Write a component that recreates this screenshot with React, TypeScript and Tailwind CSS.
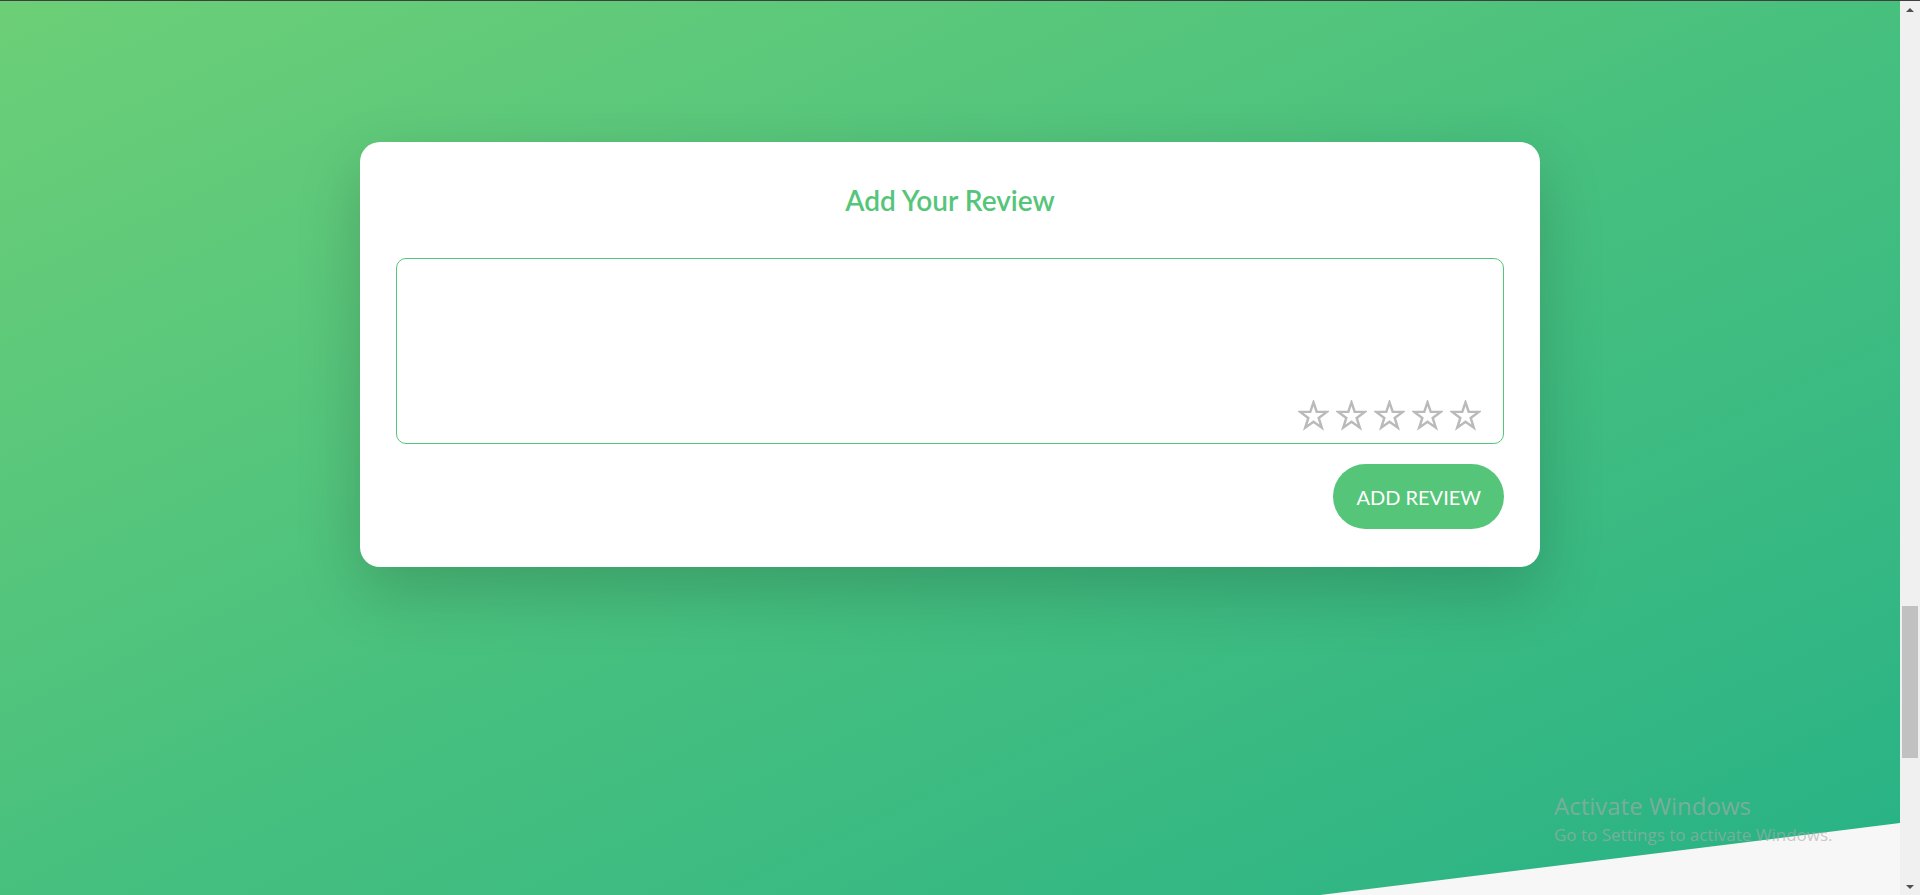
import { useState } from 'react';

function Star({ filled }: { filled: boolean }) {
  return (
    <svg viewBox="0 0 24 24" className="h-[31px] w-[31px]">
      <polygon
        points="12,1.8 14.5,9.2 22.3,9.2 16,13.9 18.4,21.4 12,16.8 5.6,21.4 8,13.9 1.7,9.2 9.5,9.2"
        fill={filled ? '#55c57a' : 'none'}
        stroke={filled ? '#55c57a' : '#bababa'}
        strokeWidth="1.9"
        strokeLinejoin="miter"
      />
    </svg>
  );
}

export default function App() {
  const [rating, setRating] = useState(0);
  const [review, setReview] = useState('');

  return (
    <div className="flex h-[895px] w-full overflow-hidden bg-[#f7f7f7] font-['Lato','Open_Sans',sans-serif]">
      {/* page */}
      <div className="relative flex-1 border-t border-[#3f3f3f]">
        <section className="h-full w-full bg-gradient-to-br from-[#6ccf77] via-[#47c07e] to-[#26b286] [clip-path:polygon(0_0,100%_0,100%_822px,0_1058px)]">
          <div className="pt-[141px]">
            <div className="mx-auto w-[1180px] rounded-[20px] bg-white px-9 pt-9 pb-[38px] shadow-[0_1.5rem_4rem_rgba(0,0,0,0.18)]">
              <h2 className="text-center text-[28px] leading-[44px] font-semibold text-[#55c57a]">
                Add Your Review
              </h2>

              <div className="relative mt-9 h-[186px] rounded-[10px] border border-[#55c57a]">
                <textarea
                  value={review}
                  onChange={(e) => setReview(e.target.value)}
                  className="h-full w-full resize-none rounded-[10px] bg-transparent p-4 text-base text-gray-700 outline-none"
                />
                <div className="absolute right-[22px] bottom-[12px] flex gap-[7px]">
                  {[1, 2, 3, 4, 5].map((n) => (
                    <button key={n} onClick={() => setRating(n)} className="cursor-pointer">
                      <Star filled={n <= rating} />
                    </button>
                  ))}
                </div>
              </div>

              <div className="mt-5 flex justify-end">
                <button className="h-[65px] rounded-full bg-[#55c57a] px-[23px] text-[20px] text-white uppercase hover:bg-[#4ab36d]">
                  Add Review
                </button>
              </div>
            </div>
          </div>
        </section>

        {/* OS watermark */}
        <div className="pointer-events-none absolute top-[790px] left-[1554px] font-['Open_Sans',sans-serif] text-[rgba(170,170,170,0.62)]">
          <p className="text-[24px] leading-[30px]">Activate Windows</p>
          <p className="mt-[4px] text-[17px] leading-5">Go to Settings to activate Windows.</p>
        </div>
      </div>

      {/* scrollbar */}
      <div className="flex w-[20px] flex-col border-t border-[#3f3f3f] bg-[#f0f0f0]">
        <div className="flex h-[17px] items-center justify-center">
          <div className="h-0 w-0 border-x-[4px] border-b-[4px] border-x-transparent border-b-[#505050]" />
        </div>
        <div className="flex-1 pt-[588px]">
          <div className="mx-auto h-[152px] w-[16px] bg-[#c1c1c1]" />
        </div>
        <div className="flex h-[17px] items-center justify-center">
          <div className="h-0 w-0 border-x-[4px] border-t-[4px] border-x-transparent border-t-[#505050]" />
        </div>
      </div>
    </div>
  );
}
